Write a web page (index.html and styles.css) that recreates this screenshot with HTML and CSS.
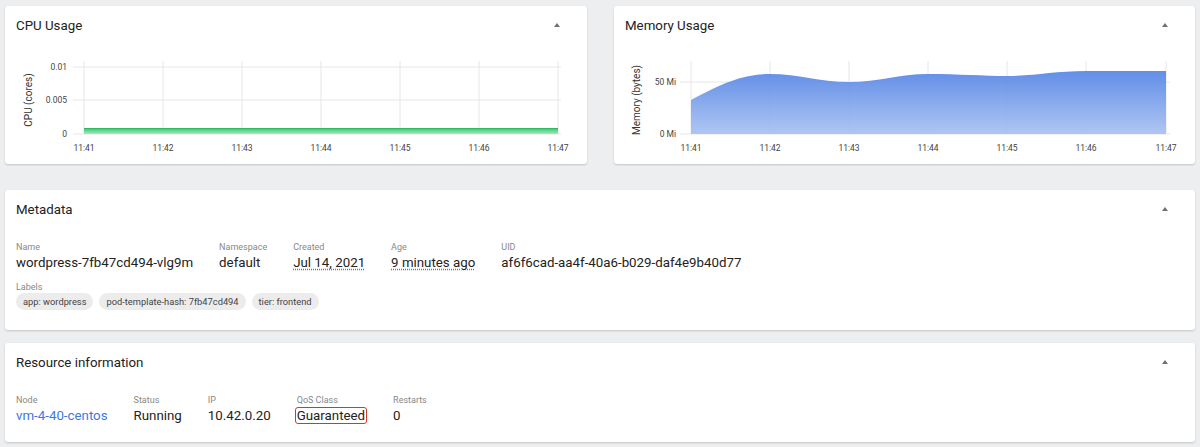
FILE: index.html
```html
<!DOCTYPE html>
<html lang="en">
<head>
    <meta charset="UTF-8">
    <title>Pod details</title>
    <link rel="stylesheet" href="styles.css">
</head>
<body>
    <div class="charts">
        <div class="card chart-card">
            <div class="card-header">
                <h3>CPU Usage</h3>
                <span class="collapse"></span>
            </div>
            <svg class="chart" width="582" height="120" viewBox="0 0 582 120">
                <defs>
                    <linearGradient id="cpuFill" x1="0" y1="0" x2="0" y2="1">
                        <stop offset="0" stop-color="#34c46a"/>
                        <stop offset="1" stop-color="#a6e8bf"/>
                    </linearGradient>
                </defs>
                <g class="grid">
                    <line x1="68" y1="23" x2="556" y2="23"/>
                    <line x1="68" y1="56" x2="556" y2="56"/>
                    <line x1="68" y1="90" x2="556" y2="90"/>
                    <line x1="79" y1="17" x2="79" y2="90"/>
                    <line x1="158" y1="17" x2="158" y2="90"/>
                    <line x1="237" y1="17" x2="237" y2="90"/>
                    <line x1="316" y1="17" x2="316" y2="90"/>
                    <line x1="395" y1="17" x2="395" y2="90"/>
                    <line x1="474" y1="17" x2="474" y2="90"/>
                    <line x1="553" y1="17" x2="553" y2="90"/>
                </g>
                <rect x="79" y="84" width="474" height="6" fill="url(#cpuFill)"/>
                <line x1="79" y1="84.5" x2="553" y2="84.5" stroke="#2fb863" stroke-width="1"/>
                <g class="tick" text-anchor="end">
                    <text x="62" y="26">0.01</text>
                    <text x="62" y="59">0.005</text>
                    <text x="62" y="93">0</text>
                </g>
                <text class="axis-title" transform="translate(27 56) rotate(-90)" text-anchor="middle">CPU (cores)</text>
                <g class="tick" text-anchor="middle">
                    <text x="79" y="107">11:41</text>
                    <text x="158" y="107">11:42</text>
                    <text x="237" y="107">11:43</text>
                    <text x="316" y="107">11:44</text>
                    <text x="395" y="107">11:45</text>
                    <text x="474" y="107">11:46</text>
                    <text x="553" y="107">11:47</text>
                </g>
            </svg>
        </div>
        <div class="card chart-card">
            <div class="card-header">
                <h3>Memory Usage</h3>
                <span class="collapse"></span>
            </div>
            <svg class="chart" width="581" height="120" viewBox="0 0 581 120">
                <defs>
                    <linearGradient id="memFill" x1="0" y1="0" x2="0" y2="1">
                        <stop offset="0" stop-color="#5585e5"/>
                        <stop offset="1" stop-color="#a9c1f2"/>
                    </linearGradient>
                </defs>
                <g class="grid">
                    <line x1="66" y1="38" x2="556" y2="38"/>
                    <line x1="66" y1="90" x2="556" y2="90"/>
                    <line x1="77" y1="17" x2="77" y2="90"/>
                    <line x1="156" y1="17" x2="156" y2="90"/>
                    <line x1="235" y1="17" x2="235" y2="90"/>
                    <line x1="314" y1="17" x2="314" y2="90"/>
                    <line x1="393" y1="17" x2="393" y2="90"/>
                    <line x1="472" y1="17" x2="472" y2="90"/>
                    <line x1="552" y1="17" x2="552" y2="90"/>
                </g>
                <path d="M77 56 C110 38 130 30 156 30 C185 30 205 38 235 38 C265 38 285 30 314 30 C345 30 370 32 393 32 C420 32 440 27 472 27 L552 27 L552 90 L77 90 Z" fill="url(#memFill)" fill-opacity="0.92"/>
                <g class="tick" text-anchor="end">
                    <text x="62" y="41">50 Mi</text>
                    <text x="62" y="93">0 Mi</text>
                </g>
                <text class="axis-title" transform="translate(26 56) rotate(-90)" text-anchor="middle">Memory (bytes)</text>
                <g class="tick" text-anchor="middle">
                    <text x="77" y="107">11:41</text>
                    <text x="156" y="107">11:42</text>
                    <text x="235" y="107">11:43</text>
                    <text x="314" y="107">11:44</text>
                    <text x="393" y="107">11:45</text>
                    <text x="472" y="107">11:46</text>
                    <text x="552" y="107">11:47</text>
                </g>
            </svg>
        </div>
    </div>

    <div class="card metadata">
        <div class="card-header">
            <h3>Metadata</h3>
            <span class="collapse"></span>
        </div>
        <div class="card-body">
            <div class="fields">
                <div class="field">
                    <div class="field-label">Name</div>
                    <div class="field-value">wordpress-7fb47cd494-vlg9m</div>
                </div>
                <div class="field">
                    <div class="field-label">Namespace</div>
                    <div class="field-value">default</div>
                </div>
                <div class="field">
                    <div class="field-label">Created</div>
                    <div class="field-value dotted">Jul 14, 2021</div>
                </div>
                <div class="field">
                    <div class="field-label">Age</div>
                    <div class="field-value dotted">9 minutes ago</div>
                </div>
                <div class="field">
                    <div class="field-label">UID</div>
                    <div class="field-value">af6f6cad-aa4f-40a6-b029-daf4e9b40d77</div>
                </div>
            </div>
            <div class="field-label labels-title">Labels</div>
            <div class="chips">
                <span class="chip">app: wordpress</span>
                <span class="chip">pod-template-hash: 7fb47cd494</span>
                <span class="chip">tier: frontend</span>
            </div>
        </div>
    </div>

    <div class="card resource">
        <div class="card-header">
            <h3>Resource information</h3>
            <span class="collapse"></span>
        </div>
        <div class="card-body">
            <div class="fields">
                <div class="field">
                    <div class="field-label">Node</div>
                    <div class="field-value"><a href="#">vm-4-40-centos</a></div>
                </div>
                <div class="field">
                    <div class="field-label">Status</div>
                    <div class="field-value">Running</div>
                </div>
                <div class="field">
                    <div class="field-label">IP</div>
                    <div class="field-value">10.42.0.20</div>
                </div>
                <div class="field">
                    <div class="field-label">QoS Class</div>
                    <div class="field-value"><span class="highlight">Guaranteed</span></div>
                </div>
                <div class="field">
                    <div class="field-label">Restarts</div>
                    <div class="field-value">0</div>
                </div>
            </div>
        </div>
    </div>
</body>
</html>
```

FILE: styles.css
```css
body {
    margin: 0;
    padding: 6px 5px;
    background-color: #edeef0;
    font-family: Roboto, "Liberation Sans", Arial, sans-serif;
    color: #222;
}

.card {
    background-color: #fff;
    border-radius: 3px;
    box-shadow: 0 1px 2px rgba(0, 0, 0, 0.18);
}

.charts {
    display: grid;
    grid-template-columns: 582px 581px;
    column-gap: 27px;
    margin-bottom: 26px;
}

.chart-card {
    height: 158px;
}

.card-header {
    height: 38px;
    display: flex;
    align-items: center;
    justify-content: space-between;
    padding: 0 27px 0 11px;
}

.card-header h3 {
    margin: 0;
    font-size: 13.3px;
    font-weight: 400;
    color: #222;
}

.collapse {
    width: 0;
    height: 0;
    border-left: 3.5px solid transparent;
    border-right: 3.5px solid transparent;
    border-bottom: 4px solid #707070;
}

.chart {
    display: block;
}

.grid line {
    stroke: #e6e6e6;
    stroke-width: 1;
}

.tick text {
    font-size: 8.5px;
    fill: #444;
}

.axis-title {
    font-size: 10px;
    fill: #333;
}

.metadata {
    height: 140px;
    margin-bottom: 13px;
}

.resource {
    height: 99px;
}

.card-body {
    padding: 13px 11px 0;
}

.fields {
    display: flex;
    gap: 26px;
}

.field-label {
    font-size: 9px;
    color: #888;
    line-height: 12px;
}

.field-value {
    font-size: 13.3px;
    line-height: 20px;
    color: #222;
}

.field-value a {
    color: #3d77e0;
    text-decoration: none;
}

.dotted {
    text-decoration: underline dotted #777;
    text-underline-offset: 2px;
}

.highlight {
    border: 1.5px solid #e0321e;
    border-radius: 3px;
    padding: 0 1px;
    margin-left: -2px;
}

.labels-title {
    margin-top: 9px;
    line-height: 11px;
}

.chips {
    display: flex;
    gap: 6px;
    margin-top: 0;
}

.chip {
    background-color: #ececec;
    border-radius: 9px;
    padding: 0 7px;
    height: 17px;
    line-height: 17px;
    font-size: 9.3px;
    color: #444;
}
```
